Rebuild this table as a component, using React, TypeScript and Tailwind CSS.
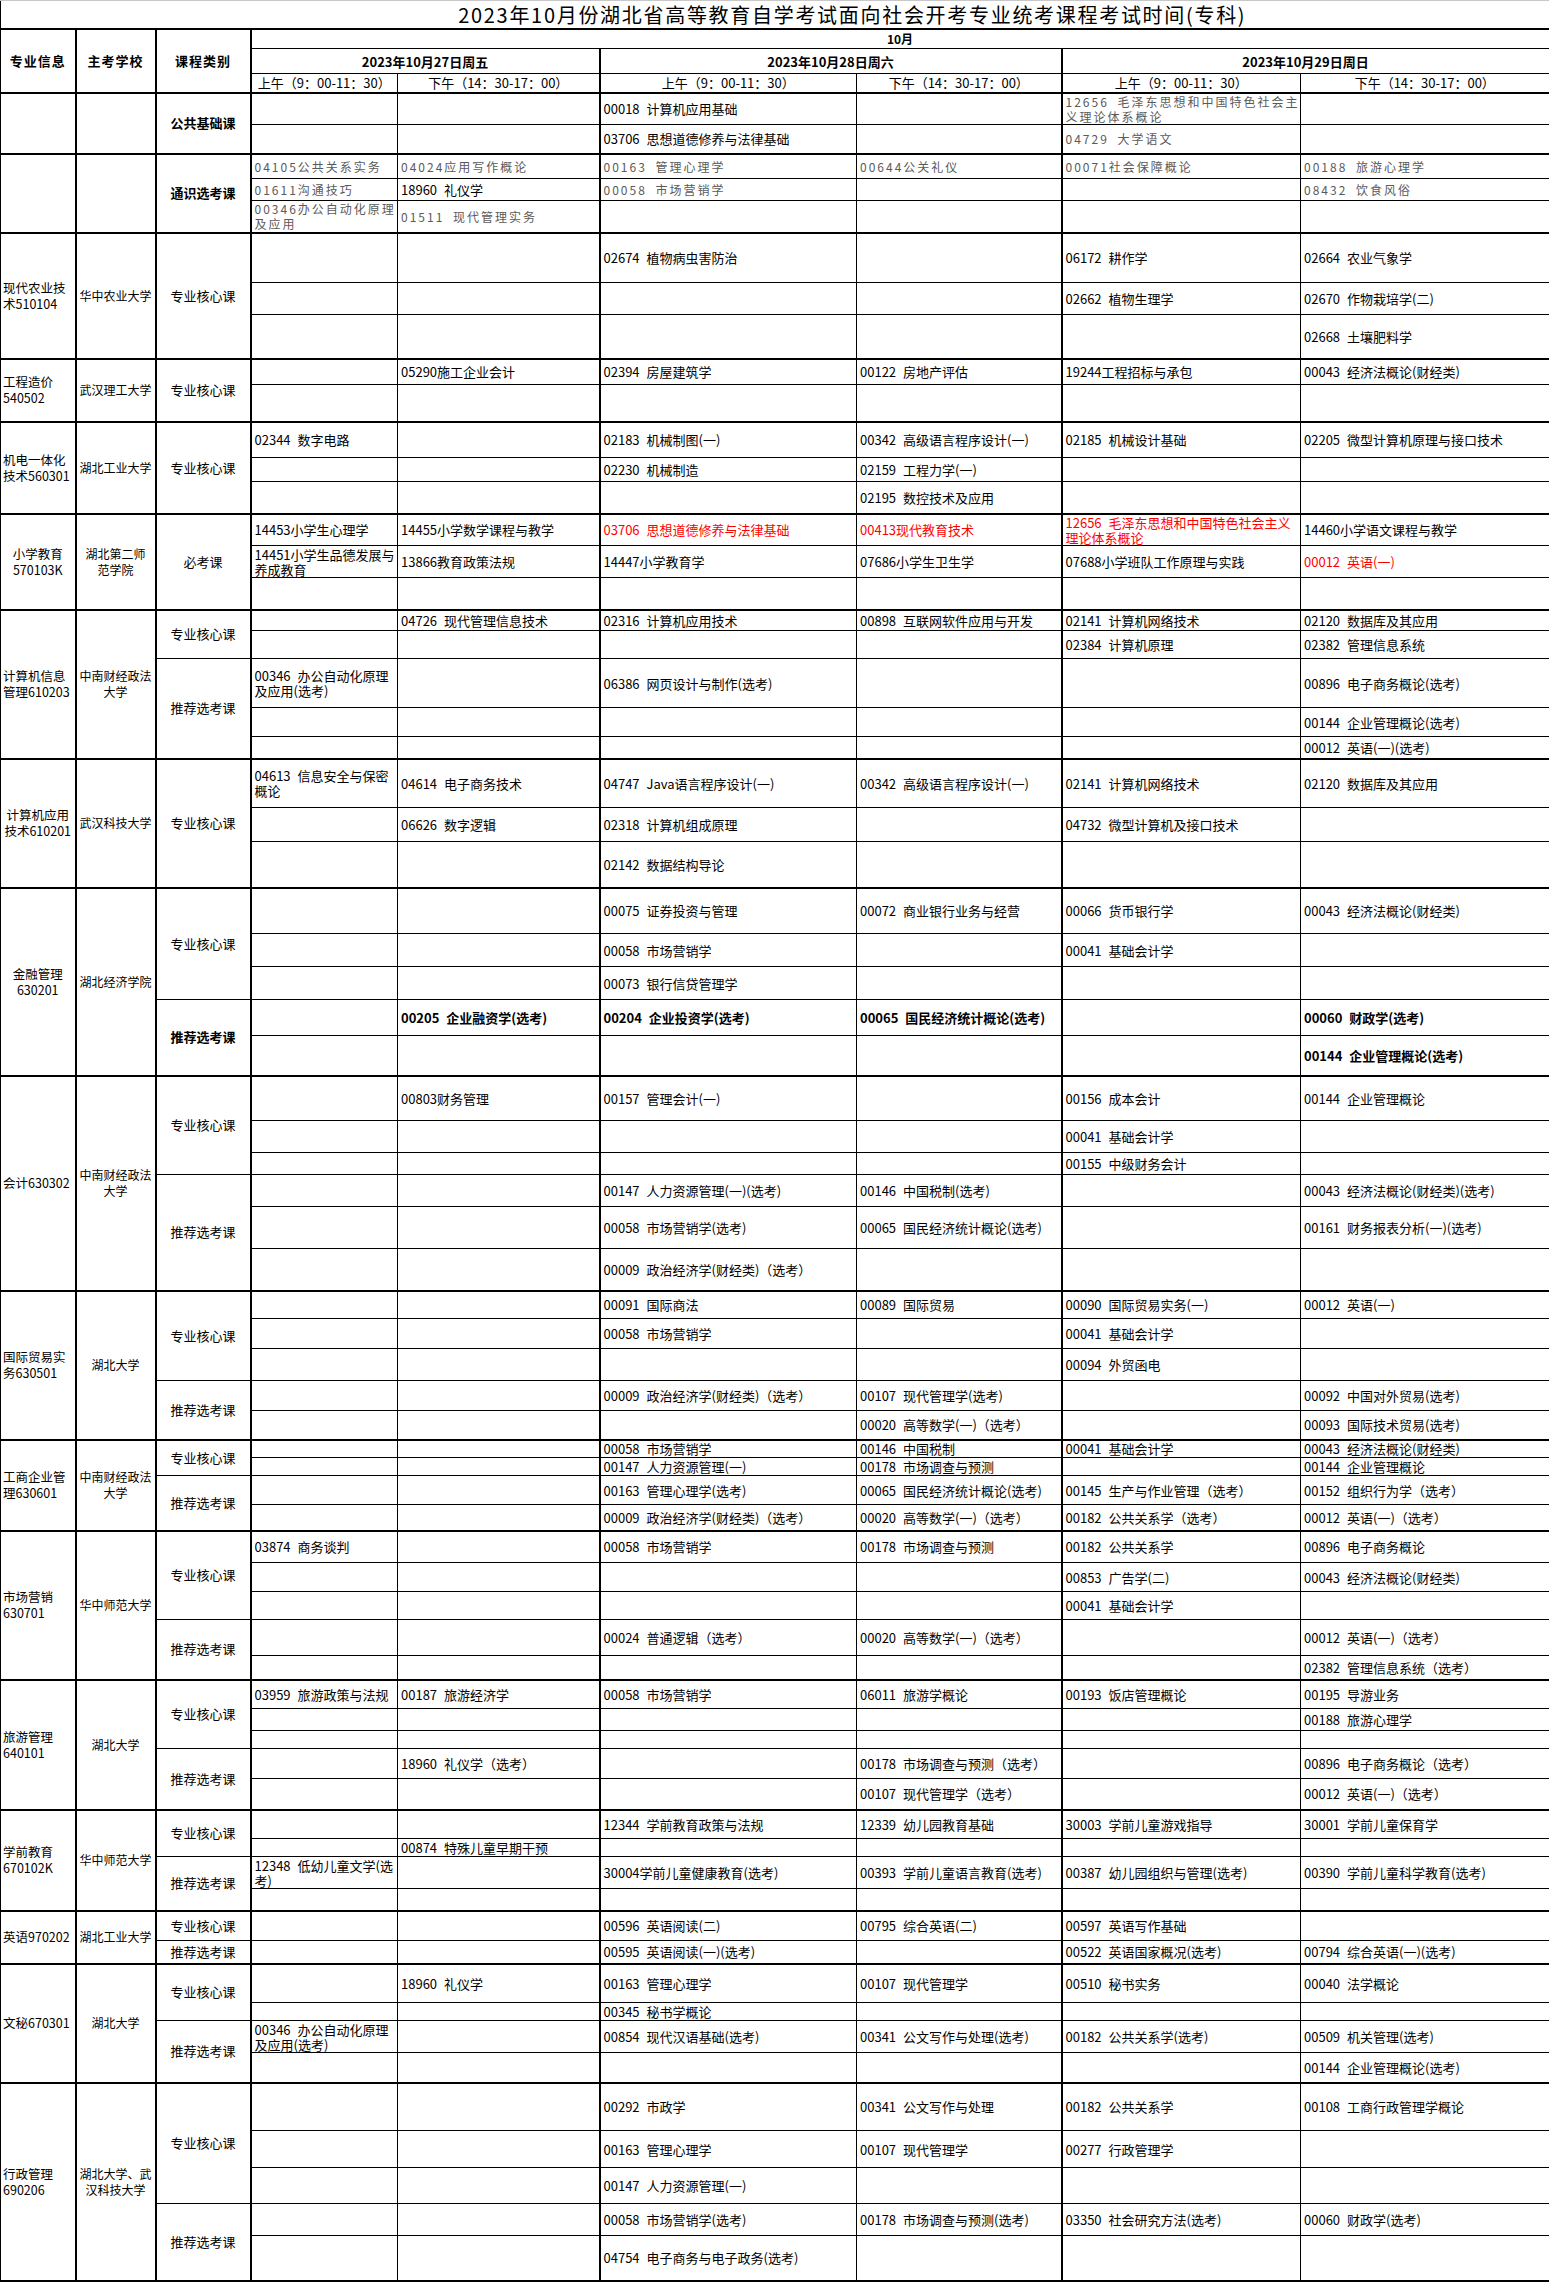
import React from 'react';

type Cell = string | { t: string; k: 'g' | 'r' | 'b' };
type Row = { h: number; c: Cell[] };
type Cat = { label: string; bold?: boolean; rows: Row[] };
type Group = { major: string; center?: boolean; school: string; cats: Cat[] };

const G = (t: string): Cell => ({ t, k: 'g' });
const R = (t: string): Cell => ({ t, k: 'r' });
const B = (t: string): Cell => ({ t, k: 'b' });
const E = ['', '', '', '', '', ''];

const groups: Group[] = [
  {
    major: '',
    school: '',
    cats: [
      {
        label: '公共基础课',
        bold: true,
        rows: [
          { h: 32, c: ['', '', '00018 计算机应用基础', '', G('12656 毛泽东思想和中国特色社会主\n义理论体系概论'), ''] },
          { h: 29, c: ['', '', '03706 思想道德修养与法律基础', '', G('04729 大学语文'), ''] },
        ],
      },
    ],
  },
  {
    major: '',
    school: '',
    cats: [
      {
        label: '通识选考课',
        bold: true,
        rows: [
          { h: 25, c: [G('04105公共关系实务'), G('04024应用写作概论'), G('00163 管理心理学'), G('00644公关礼仪'), G('00071社会保障概论'), G('00188 旅游心理学')] },
          { h: 22, c: [G('01611沟通技巧'), '18960 礼仪学', G('00058 市场营销学'), '', '', G('08432 饮食风俗')] },
          { h: 32, c: [G('00346办公自动化原理\n及应用'), G('01511 现代管理实务'), '', '', '', ''] },
        ],
      },
    ],
  },
  {
    major: '现代农业技\n术510104',
    school: '华中农业大学',
    cats: [
      {
        label: '专业核心课',
        rows: [
          { h: 50, c: ['', '', '02674 植物病虫害防治', '', '06172 耕作学', '02664 农业气象学'] },
          { h: 32, c: ['', '', '', '', '02662 植物生理学', '02670 作物栽培学(二)'] },
          { h: 44, c: ['', '', '', '', '', '02668 土壤肥料学'] },
        ],
      },
    ],
  },
  {
    major: '工程造价\n540502',
    school: '武汉理工大学',
    cats: [
      {
        label: '专业核心课',
        rows: [
          { h: 26, c: ['', '05290施工企业会计', '02394 房屋建筑学', '00122 房地产评估', '19244工程招标与承包', '00043 经济法概论(财经类)'] },
          { h: 37, c: E },
        ],
      },
    ],
  },
  {
    major: '机电一体化\n技术560301',
    school: '湖北工业大学',
    cats: [
      {
        label: '专业核心课',
        rows: [
          { h: 36, c: ['02344 数字电路', '', '02183 机械制图(一)', '00342 高级语言程序设计(一)', '02185 机械设计基础', '02205 微型计算机原理与接口技术'] },
          { h: 24, c: ['', '', '02230 机械制造', '02159 工程力学(一)', '', ''] },
          { h: 32, c: ['', '', '', '02195 数控技术及应用', '', ''] },
        ],
      },
    ],
  },
  {
    major: '小学教育\n570103K',
    center: true,
    school: '湖北第二师\n范学院',
    cats: [
      {
        label: '必考课',
        rows: [
          { h: 32, c: ['14453小学生心理学', '14455小学数学课程与教学', R('03706 思想道德修养与法律基础'), R('00413现代教育技术'), R('12656 毛泽东思想和中国特色社会主义\n理论体系概论'), '14460小学语文课程与教学'] },
          { h: 32, c: ['14451小学生品德发展与\n养成教育', '13866教育政策法规', '14447小学教育学', '07686小学生卫生学', '07688小学班队工作原理与实践', R('00012 英语(一)')] },
          { h: 32, c: E },
        ],
      },
    ],
  },
  {
    major: '计算机信息\n管理610203',
    school: '中南财经政法\n大学',
    cats: [
      {
        label: '专业核心课',
        rows: [
          { h: 21, c: ['', '04726 现代管理信息技术', '02316 计算机应用技术', '00898 互联网软件应用与开发', '02141 计算机网络技术', '02120 数据库及其应用'] },
          { h: 28, c: ['', '', '', '', '02384 计算机原理', '02382 管理信息系统'] },
        ],
      },
      {
        label: '推荐选考课',
        rows: [
          { h: 49, c: ['00346 办公自动化原理\n及应用(选考)', '', '06386 网页设计与制作(选考)', '', '', '00896 电子商务概论(选考)'] },
          { h: 29, c: ['', '', '', '', '', '00144 企业管理概论(选考)'] },
          { h: 22, c: ['', '', '', '', '', '00012 英语(一)(选考)'] },
        ],
      },
    ],
  },
  {
    major: '计算机应用\n技术610201',
    center: true,
    school: '武汉科技大学',
    cats: [
      {
        label: '专业核心课',
        rows: [
          { h: 49, c: ['04613 信息安全与保密\n概论', '04614 电子商务技术', '04747 Java语言程序设计(一)', '00342 高级语言程序设计(一)', '02141 计算机网络技术', '02120 数据库及其应用'] },
          { h: 34, c: ['', '06626 数字逻辑', '02318 计算机组成原理', '', '04732 微型计算机及接口技术', ''] },
          { h: 46, c: ['', '', '02142 数据结构导论', '', '', ''] },
        ],
      },
    ],
  },
  {
    major: '金融管理\n630201',
    center: true,
    school: '湖北经济学院',
    cats: [
      {
        label: '专业核心课',
        rows: [
          { h: 46, c: ['', '', '00075 证券投资与管理', '00072 商业银行业务与经营', '00066 货币银行学', '00043 经济法概论(财经类)'] },
          { h: 33, c: ['', '', '00058 市场营销学', '', '00041 基础会计学', ''] },
          { h: 33, c: ['', '', '00073 银行信贷管理学', '', '', ''] },
        ],
      },
      {
        label: '推荐选考课',
        bold: true,
        rows: [
          { h: 36, c: ['', B('00205 企业融资学(选考)'), B('00204 企业投资学(选考)'), B('00065 国民经济统计概论(选考)'), '', B('00060 财政学(选考)')] },
          { h: 40, c: ['', '', '', '', '', B('00144 企业管理概论(选考)')] },
        ],
      },
    ],
  },
  {
    major: '会计630302',
    school: '中南财经政法\n大学',
    cats: [
      {
        label: '专业核心课',
        rows: [
          { h: 45, c: ['', '00803财务管理', '00157 管理会计(一)', '', '00156 成本会计', '00144 企业管理概论'] },
          { h: 32, c: ['', '', '', '', '00041 基础会计学', ''] },
          { h: 22, c: ['', '', '', '', '00155 中级财务会计', ''] },
        ],
      },
      {
        label: '推荐选考课',
        rows: [
          { h: 32, c: ['', '', '00147 人力资源管理(一)(选考)', '00146 中国税制(选考)', '', '00043 经济法概论(财经类)(选考)'] },
          { h: 42, c: ['', '', '00058 市场营销学(选考)', '00065 国民经济统计概论(选考)', '', '00161 财务报表分析(一)(选考)'] },
          { h: 42, c: ['', '', '00009 政治经济学(财经类)（选考）', '', '', ''] },
        ],
      },
    ],
  },
  {
    major: '国际贸易实\n务630501',
    school: '湖北大学',
    cats: [
      {
        label: '专业核心课',
        rows: [
          { h: 28, c: ['', '', '00091 国际商法', '00089 国际贸易', '00090 国际贸易实务(一)', '00012 英语(一)'] },
          { h: 30, c: ['', '', '00058 市场营销学', '', '00041 基础会计学', ''] },
          { h: 32, c: ['', '', '', '', '00094 外贸函电', ''] },
        ],
      },
      {
        label: '推荐选考课',
        rows: [
          { h: 30, c: ['', '', '00009 政治经济学(财经类)（选考）', '00107 现代管理学(选考)', '', '00092 中国对外贸易(选考)'] },
          { h: 29, c: ['', '', '', '00020 高等数学(一)（选考）', '', '00093 国际技术贸易(选考)'] },
        ],
      },
    ],
  },
  {
    major: '工商企业管\n理630601',
    school: '中南财经政法\n大学',
    cats: [
      {
        label: '专业核心课',
        rows: [
          { h: 18, c: ['', '', '00058 市场营销学', '00146 中国税制', '00041 基础会计学', '00043 经济法概论(财经类)'] },
          { h: 18, c: ['', '', '00147 人力资源管理(一)', '00178 市场调查与预测', '', '00144 企业管理概论'] },
        ],
      },
      {
        label: '推荐选考课',
        rows: [
          { h: 29, c: ['', '', '00163 管理心理学(选考)', '00065 国民经济统计概论(选考)', '00145 生产与作业管理（选考）', '00152 组织行为学（选考）'] },
          { h: 26, c: ['', '', '00009 政治经济学(财经类)（选考）', '00020 高等数学(一)（选考）', '00182 公共关系学（选考）', '00012 英语(一)（选考）'] },
        ],
      },
    ],
  },
  {
    major: '市场营销\n630701',
    school: '华中师范大学',
    cats: [
      {
        label: '专业核心课',
        rows: [
          { h: 32, c: ['03874 商务谈判', '', '00058 市场营销学', '00178 市场调查与预测', '00182 公共关系学', '00896 电子商务概论'] },
          { h: 29, c: ['', '', '', '', '00853 广告学(二)', '00043 经济法概论(财经类)'] },
          { h: 28, c: ['', '', '', '', '00041 基础会计学', ''] },
        ],
      },
      {
        label: '推荐选考课',
        rows: [
          { h: 36, c: ['', '', '00024 普通逻辑（选考）', '00020 高等数学(一)（选考）', '', '00012 英语(一)（选考）'] },
          { h: 24, c: ['', '', '', '', '', '02382 管理信息系统（选考）'] },
        ],
      },
    ],
  },
  {
    major: '旅游管理\n640101',
    school: '湖北大学',
    cats: [
      {
        label: '专业核心课',
        rows: [
          { h: 29, c: ['03959 旅游政策与法规', '00187 旅游经济学', '00058 市场营销学', '06011 旅游学概论', '00193 饭店管理概论', '00195 导游业务'] },
          { h: 22, c: ['', '', '', '', '', '00188 旅游心理学'] },
          { h: 18, c: E },
        ],
      },
      {
        label: '推荐选考课',
        rows: [
          { h: 30, c: ['', '18960 礼仪学（选考）', '', '00178 市场调查与预测（选考）', '', '00896 电子商务概论（选考）'] },
          { h: 31, c: ['', '', '', '00107 现代管理学（选考）', '', '00012 英语(一)（选考）'] },
        ],
      },
    ],
  },
  {
    major: '学前教育\n670102K',
    school: '华中师范大学',
    cats: [
      {
        label: '专业核心课',
        rows: [
          { h: 29, c: ['', '', '12344 学前教育政策与法规', '12339 幼儿园教育基础', '30003 学前儿童游戏指导', '30001 学前儿童保育学'] },
          { h: 18, c: ['', '00874 特殊儿童早期干预', '', '', '', ''] },
        ],
      },
      {
        label: '推荐选考课',
        rows: [
          { h: 32, c: ['12348 低幼儿童文学(选\n考)', '', '30004学前儿童健康教育(选考)', '00393 学前儿童语言教育(选考)', '00387 幼儿园组织与管理(选考)', '00390 学前儿童科学教育(选考)'] },
          { h: 22, c: E },
        ],
      },
    ],
  },
  {
    major: '英语970202',
    school: '湖北工业大学',
    cats: [
      { label: '专业核心课', rows: [{ h: 30, c: ['', '', '00596 英语阅读(二)', '00795 综合英语(二)', '00597 英语写作基础', ''] }] },
      { label: '推荐选考课', rows: [{ h: 23, c: ['', '', '00595 英语阅读(一)(选考)', '', '00522 英语国家概况(选考)', '00794 综合英语(一)(选考)'] }] },
    ],
  },
  {
    major: '文秘670301',
    school: '湖北大学',
    cats: [
      {
        label: '专业核心课',
        rows: [
          { h: 39, c: ['', '18960 礼仪学', '00163 管理心理学', '00107 现代管理学', '00510 秘书实务', '00040 法学概论'] },
          { h: 18, c: ['', '', '00345 秘书学概论', '', '', ''] },
        ],
      },
      {
        label: '推荐选考课',
        rows: [
          { h: 32, c: ['00346 办公自动化原理\n及应用(选考)', '', '00854 现代汉语基础(选考)', '00341 公文写作与处理(选考)', '00182 公共关系学(选考)', '00509 机关管理(选考)'] },
          { h: 30, c: ['', '', '', '', '', '00144 企业管理概论(选考)'] },
        ],
      },
    ],
  },
  {
    major: '行政管理\n690206',
    school: '湖北大学、武\n汉科技大学',
    cats: [
      {
        label: '专业核心课',
        rows: [
          { h: 48, c: ['', '', '00292 市政学', '00341 公文写作与处理', '00182 公共关系学', '00108 工商行政管理学概论'] },
          { h: 37, c: ['', '', '00163 管理心理学', '00107 现代管理学', '00277 行政管理学', ''] },
          { h: 36, c: ['', '', '00147 人力资源管理(一)', '', '', ''] },
        ],
      },
      {
        label: '推荐选考课',
        rows: [
          { h: 32, c: ['', '', '00058 市场营销学(选考)', '00178 市场调查与预测(选考)', '03350 社会研究方法(选考)', '00060 财政学(选考)'] },
          { h: 45, c: ['', '', '04754 电子商务与电子政务(选考)', '', '', ''] },
        ],
      },
    ],
  },
];

// thick vertical lines on the left of data columns 0, 2, 4 and right of column 5
const dataEdge = ['border-l-2', '', 'border-l-2', '', 'border-l-2', 'border-r-2'];

function renderCell(cell: Cell) {
  if (typeof cell === 'string') return cell;
  if (cell.k === 'g') return <span className="text-[12px] tracking-[2px] text-[#5a5a5a]">{cell.t}</span>;
  if (cell.k === 'r') return <span className="text-[#ff0000]">{cell.t}</span>;
  return <span className="font-bold">{cell.t}</span>;
}

export default function App() {
  const last = groups.length - 1;
  return (
    <div className="bg-white font-['Noto_Sans_CJK_SC',sans-serif] text-black">
      <table className="w-[1549px] table-fixed border-collapse">
        <colgroup>
          <col className="w-[75px]" />
          <col className="w-[80px]" />
          <col className="w-[95px]" />
          <col className="w-[147px]" />
          <col className="w-[202px]" />
          <col className="w-[257px]" />
          <col className="w-[205px]" />
          <col className="w-[239px]" />
          <col className="w-[249px]" />
        </colgroup>
        <thead>
          <tr className="h-[28px]">
            <td colSpan={2} className="border-t border-l border-[#c8c8c8] border-b-2 border-b-black border-l-black p-0" />
            <td
              colSpan={7}
              className="border-t border-r border-[#c8c8c8] border-b-2 border-b-black border-r-black p-0 pb-[1px] text-center align-bottom text-[20px] leading-[24px] tracking-[1.7px]"
            >
              2023年10月份湖北省高等教育自学考试面向社会开考专业统考课程考试时间(专科)
            </td>
          </tr>
          <tr className="h-[20px]">
            <td rowSpan={3} className="border border-black border-b-2 text-center align-middle text-[13px] font-bold tracking-[1px]">
              专业信息
            </td>
            <td rowSpan={3} className="border border-black border-l-2 border-b-2 text-center align-middle text-[13px] font-bold tracking-[1px]">
              主考学校
            </td>
            <td rowSpan={3} className="border border-black border-l-2 border-b-2 text-center align-middle text-[13px] font-bold tracking-[1px]">
              课程类别
            </td>
            <td colSpan={6} className="border border-black border-l-2 border-r-2 p-0 text-center align-middle text-[12px] font-bold leading-[15px]">
              10月
            </td>
          </tr>
          <tr className="h-[25px]">
            <td colSpan={2} className="border border-black border-l-2 p-0 text-center align-middle text-[13px] font-bold leading-[15px]">
              2023年10月27日周五
            </td>
            <td colSpan={2} className="border border-black border-l-2 p-0 text-center align-middle text-[13px] font-bold leading-[15px]">
              2023年10月28日周六
            </td>
            <td colSpan={2} className="border border-black border-l-2 border-r-2 p-0 text-center align-middle text-[13px] font-bold leading-[15px]">
              2023年10月29日周日
            </td>
          </tr>
          <tr className="h-[19px]">
            {['上午（9：00-11：30）', '下午（14：30-17：00）', '上午（9：00-11：30）', '下午（14：30-17：00）', '上午（9：00-11：30）', '下午（14：30-17：00）'].map((t, i) => (
              <td
                key={i}
                className={`border border-black border-b-2 ${dataEdge[i]} p-0 text-center align-middle text-[13px] leading-[15px] whitespace-nowrap`}
              >
                {t}
              </td>
            ))}
          </tr>
        </thead>
        <tbody>
          {groups.map((g, gi) => {
            const total = g.cats.reduce((n, c) => n + c.rows.length, 0);
            let idx = 0;
            return g.cats.flatMap((cat, ci) =>
              cat.rows.map((row, ri) => {
                const first = ci === 0 && ri === 0;
                const lastRow = gi === last && idx === total - 1;
                idx += 1;
                const top = first ? 'border-t-2' : '';
                const bottom = lastRow ? 'border-b-2' : '';
                return (
                  <tr key={`${gi}-${ci}-${ri}`} style={{ height: row.h }}>
                    {first && (
                      <td
                        rowSpan={total}
                        className={`border border-black border-t-2 ${gi === last ? 'border-b-2' : ''} px-[2px] py-0 align-middle text-[12.5px] leading-[16px] whitespace-pre ${g.center ? 'text-center' : 'text-left'}`}
                      >
                        {g.major}
                      </td>
                    )}
                    {first && (
                      <td
                        rowSpan={total}
                        className={`border border-black border-l-2 border-t-2 ${gi === last ? 'border-b-2' : ''} p-0 text-center align-middle text-[12px] leading-[16px] whitespace-pre`}
                      >
                        {g.school}
                      </td>
                    )}
                    {ri === 0 && (
                      <td
                        rowSpan={cat.rows.length}
                        className={`border border-black border-l-2 ${ci === 0 ? 'border-t-2' : ''} ${gi === last && ci === g.cats.length - 1 ? 'border-b-2' : ''} p-0 text-center align-middle text-[13px] leading-[16px] ${cat.bold ? 'font-bold' : ''}`}
                      >
                        {cat.label}
                      </td>
                    )}
                    {row.c.map((cell, k) => (
                      <td
                        key={k}
                        className={`border border-black ${top} ${bottom} ${dataEdge[k]} overflow-hidden px-[3px] py-0 align-middle text-[13px] leading-[15px] whitespace-pre [word-spacing:4px]`}
                      >
                        {renderCell(cell)}
                      </td>
                    ))}
                  </tr>
                );
              })
            );
          })}
        </tbody>
      </table>
    </div>
  );
}
